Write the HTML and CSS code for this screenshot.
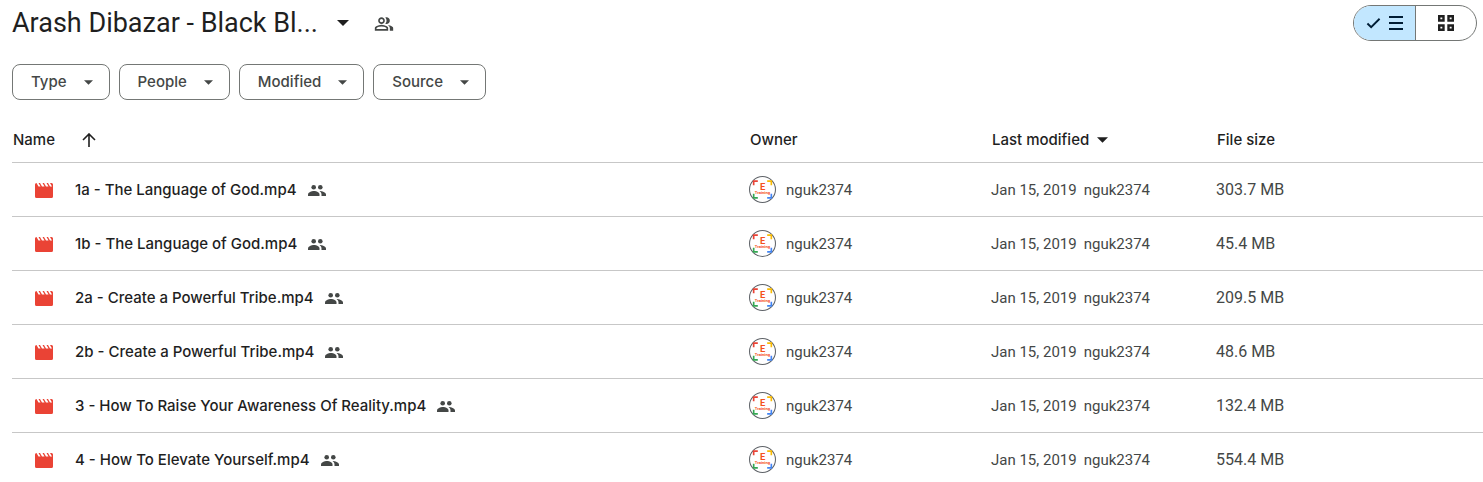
FILE: index.html
```html
<!DOCTYPE html>
<html lang="en">
<head>
<meta charset="UTF-8">
<meta name="viewport" content="width=device-width, initial-scale=1.0">
<title>Arash Dibazar - Black Bl...</title>
<link rel="stylesheet" href="styles.css">
</head>
<body>
    <!-- Shared icons -->
    <svg class="sprite" aria-hidden="true">
        <symbol id="caret" viewBox="0 0 10 5"><path d="M0 0h10L5 5z"/></symbol>
        <symbol id="movie" viewBox="0 0 18 15">
            <path d="M0 1.500Q0 0 1.500 0l2 3.500H5.500L3.500 0H5l2 3.500H9.500L7.500 0H9l2 3.500h2.500L11.500 0H13l2 3.500h2L15 0h1.500Q18 0 18 1.500v12q0 1.500-1.500 1.500h-15Q0 15 0 13.500z"/>
        </symbol>
        <symbol id="people" viewBox="0 0 18 11">
            <circle cx="5.700" cy="2.300" r="2.300"/>
            <path d="M0 11V9.500C0 7.300 3.500 6 6 6s5.500 1.300 5.500 3.500V11z"/>
            <circle cx="12.300" cy="2.300" r="2.300"/>
            <path d="M11.500 6C14 6 18 7.300 18 9.500V11h-4.500V9.500C13.500 8 12.800 6.900 11.500 6z"/>
        </symbol>
        <symbol id="ring" viewBox="0 0 26 26">
            <circle cx="13" cy="13" r="12.500" fill="#fff" stroke="#5f6368"/>
            <g fill="none" stroke-width="1.600">
                <path d="M4.500 9V5h4" stroke="#ea4335"/>
                <path d="M17.500 5h4v4" stroke="#fbbc04"/>
                <path d="M4.500 17v4h4" stroke="#34a853"/>
                <path d="M17.500 21h4v-4" stroke="#4285f4"/>
            </g>
        </symbol>
    </svg>

    <div class="page">
        <header class="header">
            <h1><button class="title">Arash Dibazar - Black Bl...<svg class="title-caret"><use href="#caret"/></svg></button></h1>
            <button class="share" aria-label="Manage sharing">
                <svg viewBox="0 -960 960 960"><path d="M40-160v-112q0-34 17.500-62.500T104-378q62-31 126-46.500T360-440q66 0 130 15.500T616-378q29 15 46.500 43.500T680-272v112H40Zm720 0v-120q0-44-24.500-84.500T666-434q51 6 96 20.500t84 35.500q36 20 55 44.500t19 53.500v120H760ZM360-480q-66 0-113-47t-47-113q0-66 47-113t113-47q66 0 113 47t47 113q0 66-47 113t-113 47Zm400-160q0 66-47 113t-113 47q-11 0-28-2.500t-28-5.500q27-32 41.500-71t14.500-81q0-42-14.500-81T544-792q14-5 28-6.500t28-1.500q66 0 113 47t47 113ZM120-240h480v-32q0-11-5.500-20T580-306q-54-27-109-40.500T360-360q-56 0-111 13.500T140-306q-9 5-14.500 14t-5.500 20v32Zm240-320q33 0 56.500-23.500T440-640q0-33-23.500-56.500T360-720q-33 0-56.500 23.500T280-640q0 33 23.500 56.500T360-560Z"/></svg>
            </button>
            <div class="view-toggle">
                <button class="active" aria-label="List layout">
                    <svg class="check" viewBox="0 0 16 12"><path d="M1.500 6.500l4 4L14.500 1.500"/></svg>
                    <svg class="lines" viewBox="0 0 16 14"><path d="M1 1h14M1 7h14M1 13h14"/></svg>
                </button>
                <button aria-label="Grid layout">
                    <svg class="grid" viewBox="0 0 16 16"><path d="M1.200 1.200h4.300v4.300H1.200zM10.500 1.200h4.300v4.300h-4.300zM1.200 10.500h4.300v4.300H1.200zM10.500 10.500h4.300v4.300h-4.300z"/></svg>
                </button>
            </div>
        </header>

        <div class="filters">
            <button class="chip">Type<svg><use href="#caret"/></svg></button>
            <button class="chip">People<svg><use href="#caret"/></svg></button>
            <button class="chip">Modified<svg><use href="#caret"/></svg></button>
            <button class="chip">Source<svg><use href="#caret"/></svg></button>
        </div>

        <table class="files">
            <colgroup><col><col class="col-owner"><col class="col-modified"><col class="col-size"></colgroup>
            <thead>
                <tr>
                    <th><div class="cell name-head">Name<svg class="arrow" viewBox="0 0 14 14"><path d="M7 14V1M1 7l6-6 6 6"/></svg></div></th>
                    <th>Owner</th>
                    <th><div class="cell modified-head">Last modified<svg class="sort-caret"><use href="#caret"/></svg></div></th>
                    <th>File size</th>
                </tr>
            </thead>
            <tbody>
                <tr>
                    <td><div class="cell name"><svg class="movie"><use href="#movie"/></svg><span>1a - The Language of God.mp4</span><svg class="people"><use href="#people"/></svg></div></td>
                    <td><div class="cell owner"><svg class="avatar" viewBox="0 0 26 26"><use href="#ring"/><text x="13" y="13" class="avatar-letter">E</text><text x="13" y="17" class="avatar-word">Training</text></svg>nguk2374</div></td>
                    <td><div class="cell modified"><span>Jan 15, 2019</span><span>nguk2374</span></div></td>
                    <td class="size">303.7 MB</td>
                </tr>
                <tr>
                    <td><div class="cell name"><svg class="movie"><use href="#movie"/></svg><span>1b - The Language of God.mp4</span><svg class="people"><use href="#people"/></svg></div></td>
                    <td><div class="cell owner"><svg class="avatar" viewBox="0 0 26 26"><use href="#ring"/><text x="13" y="13" class="avatar-letter">E</text><text x="13" y="17" class="avatar-word">Training</text></svg>nguk2374</div></td>
                    <td><div class="cell modified"><span>Jan 15, 2019</span><span>nguk2374</span></div></td>
                    <td class="size">45.4 MB</td>
                </tr>
                <tr>
                    <td><div class="cell name"><svg class="movie"><use href="#movie"/></svg><span>2a - Create a Powerful Tribe.mp4</span><svg class="people"><use href="#people"/></svg></div></td>
                    <td><div class="cell owner"><svg class="avatar" viewBox="0 0 26 26"><use href="#ring"/><text x="13" y="13" class="avatar-letter">E</text><text x="13" y="17" class="avatar-word">Training</text></svg>nguk2374</div></td>
                    <td><div class="cell modified"><span>Jan 15, 2019</span><span>nguk2374</span></div></td>
                    <td class="size">209.5 MB</td>
                </tr>
                <tr>
                    <td><div class="cell name"><svg class="movie"><use href="#movie"/></svg><span>2b - Create a Powerful Tribe.mp4</span><svg class="people"><use href="#people"/></svg></div></td>
                    <td><div class="cell owner"><svg class="avatar" viewBox="0 0 26 26"><use href="#ring"/><text x="13" y="13" class="avatar-letter">E</text><text x="13" y="17" class="avatar-word">Training</text></svg>nguk2374</div></td>
                    <td><div class="cell modified"><span>Jan 15, 2019</span><span>nguk2374</span></div></td>
                    <td class="size">48.6 MB</td>
                </tr>
                <tr>
                    <td><div class="cell name"><svg class="movie"><use href="#movie"/></svg><span>3 - How To Raise Your Awareness Of Reality.mp4</span><svg class="people"><use href="#people"/></svg></div></td>
                    <td><div class="cell owner"><svg class="avatar" viewBox="0 0 26 26"><use href="#ring"/><text x="13" y="13" class="avatar-letter">E</text><text x="13" y="17" class="avatar-word">Training</text></svg>nguk2374</div></td>
                    <td><div class="cell modified"><span>Jan 15, 2019</span><span>nguk2374</span></div></td>
                    <td class="size">132.4 MB</td>
                </tr>
                <tr>
                    <td><div class="cell name"><svg class="movie"><use href="#movie"/></svg><span>4 - How To Elevate Yourself.mp4</span><svg class="people"><use href="#people"/></svg></div></td>
                    <td><div class="cell owner"><svg class="avatar" viewBox="0 0 26 26"><use href="#ring"/><text x="13" y="13" class="avatar-letter">E</text><text x="13" y="17" class="avatar-word">Training</text></svg>nguk2374</div></td>
                    <td><div class="cell modified"><span>Jan 15, 2019</span><span>nguk2374</span></div></td>
                    <td class="size">554.4 MB</td>
                </tr>
            </tbody>
        </table>
    </div>
</body>
</html>
```
FILE: styles.css
```css
* {
    box-sizing: border-box;
}
body {
    margin: 0;
    background: #fff;
    color: #1f1f1f;
    font-family: "Google Sans", Roboto, Arial, sans-serif;
    font-size: 16px;
    line-height: 24px;
}
button {
    padding: 0;
    border: none;
    background: none;
    color: inherit;
    font: inherit;
    cursor: pointer;
}
svg {
    display: block;
    flex: none;
    fill: currentColor;
}
.sprite {
    width: 0;
    height: 0;
    position: absolute;
}
.page {
    height: 100vh;
    padding-left: 12px;
    overflow: hidden;
}

/* Header */
.header {
    display: flex;
    align-items: center;
    height: 46px;
    padding-right: 6px;
}
h1 {
    margin: 0;
    font-size: 27px;
    font-weight: 400;
    line-height: 36px;
}
.title {
    display: flex;
    align-items: center;
    gap: 19px;
}
.title-caret {
    width: 12px;
    height: 6px;
}
.share {
    margin-left: 25px;
    padding-top: 2px;
    color: #444746;
}
.share svg {
    width: 20px;
    height: 20px;
}
.view-toggle {
    display: flex;
    height: 36px;
    margin-left: auto;
    border: 1px solid #747775;
    border-radius: 18px;
    overflow: hidden;
}
.view-toggle button {
    display: flex;
    align-items: center;
    justify-content: center;
    gap: 7px;
    width: 60px;
}
.view-toggle .active {
    width: 62px;
    background: #c2e7ff;
    color: #001d35;
    border-right: 1px solid #747775;
}
.view-toggle svg {
    fill: none;
    stroke: currentColor;
    stroke-width: 2;
}
.check {
    width: 15px;
    height: 12px;
}
.lines {
    width: 16px;
    height: 14px;
}
.view-toggle .grid {
    width: 16px;
    height: 16px;
    stroke-width: 2.4;
}

/* Filter chips */
.filters {
    display: flex;
    gap: 9px;
    padding-top: 18px;
}
.chip {
    display: flex;
    align-items: center;
    gap: 17px;
    height: 36px;
    padding: 0 16px 0 18px;
    border: 1px solid #747775;
    border-radius: 8px;
    color: #444746;
    font-family: "Google Sans", Inter, Arial, sans-serif;
    font-size: 15px;
    font-weight: 500;
}
.chip svg {
    width: 9px;
    height: 5px;
}

/* File list */
.files {
    width: 100%;
    margin-top: 17px;
    border-collapse: collapse;
    table-layout: fixed;
}
.col-owner {
    width: 242px;
}
.col-modified {
    width: 225px;
}
.col-size {
    width: 267px;
}
th,
td {
    padding: 1px 0 0;
    border-bottom: 1px solid #c7c7c7;
    text-align: left;
}
th {
    height: 45px;
    padding-left: 1px;
    font-family: "Google Sans", Inter, Arial, sans-serif;
    font-size: 15px;
    font-weight: 500;
}
td {
    height: 54px;
    color: #444746;
    font-size: 15px;
}
.size {
    font-size: 16px;
}
.cell {
    display: flex;
    align-items: center;
}
.name-head {
    gap: 27px;
}
.arrow {
    width: 14px;
    height: 14px;
    fill: none;
    stroke: currentColor;
    stroke-width: 1.6;
}
.modified-head {
    gap: 8px;
}
.sort-caret {
    width: 11px;
    height: 6px;
}
.name {
    padding-left: 23px;
    font-family: "Google Sans", Inter, Arial, sans-serif;
    font-weight: 500;
}
.name span {
    margin: 0 11px 0 22px;
    color: #1f1f1f;
}
.movie {
    width: 18px;
    height: 15px;
    margin-top: 2px;
    color: #ea4335;
}
.people {
    width: 18px;
    height: 11px;
    margin-top: 2px;
}
.owner {
    gap: 10px;
}
.avatar {
    width: 27px;
    height: 27px;
}
.avatar-letter,
.avatar-word {
    fill: #f4511e;
    font-weight: 700;
    text-anchor: middle;
}
.avatar-letter {
    font-size: 9px;
}
.avatar-word {
    font-size: 4px;
}
.modified {
    gap: 7px;
}
```
